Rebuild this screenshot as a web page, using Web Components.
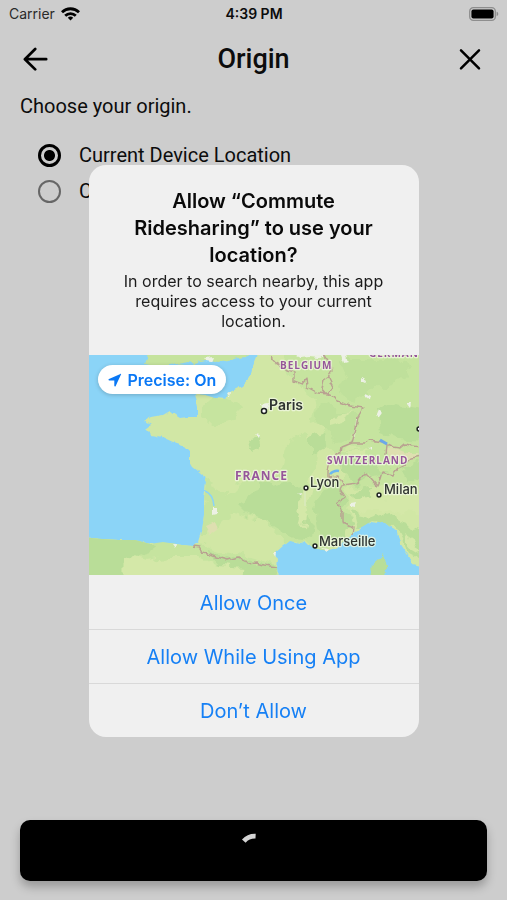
<!DOCTYPE html>
<html lang="en">
<head>
<meta charset="utf-8">
<meta name="viewport" content="width=device-width, initial-scale=1">
<title>Origin</title>
<style>
    body {
        margin: 0;
        background: #cdcdcd;
        color: #0c0c0c;
        font-family: Roboto, sans-serif;
    }
</style>
</head>
<body>

<origin-screen>
    <status-bar slot="status" carrier="Carrier" time="4:39 PM"></status-bar>
    <nav-header slot="header">Origin</nav-header>
    <span slot="hint">Choose your origin.</span>
    <radio-option name="device" checked>Current Device Location</radio-option>
    <radio-option name="custom">Custom</radio-option>
    <loading-button slot="footer"></loading-button>
</origin-screen>

<permission-dialog>
    <span slot="title">Allow “Commute Ridesharing” to use your location?</span>
    <span slot="message">In order to search nearby, this app requires access to your current location.</span>
    <location-map slot="map">Precise: On</location-map>
    <dialog-action>Allow Once</dialog-action>
    <dialog-action>Allow While Using App</dialog-action>
    <dialog-action>Don’t Allow</dialog-action>
</permission-dialog>

<template id="origin-screen">
    <style>
        :host {
            display: flex;
            flex-direction: column;
            min-height: 100vh;
            box-sizing: border-box;
            padding-bottom: 19px;
        }

        main {
            flex: 1;
            padding: 4px 20px;
            font-size: 20px;
            line-height: 24px;
        }

        p {
            margin: 0 0 19px;
        }

        footer {
            padding: 0 20px;
        }
    </style>
    <slot name="status"></slot>
    <slot name="header"></slot>
    <main>
        <p><slot name="hint"></slot></p>
        <div role="radiogroup" aria-label="Origin"><slot></slot></div>
    </main>
    <footer><slot name="footer"></slot></footer>
</template>

<template id="status-bar">
    <style>
        :host {
            display: grid;
            grid-template-columns: 1fr auto 1fr;
            align-items: center;
            height: 28px;
            padding: 0 8px 0 9px;
            font: 14px/20px Inter, sans-serif;
        }

        .left {
            display: flex;
            align-items: center;
            gap: 6px;
        }

        .carrier {
            color: #2a2a2a;
        }

        .time {
            font-weight: 600;
        }

        .battery {
            justify-self: end;
        }

        svg {
            display: block;
        }
    </style>
    <div class="left">
        <span class="carrier"></span>
        <svg width="19" height="14" viewBox="0 0 19 14" fill="none" stroke="#000" stroke-width="2.8" aria-hidden="true">
            <path d="M1 5.2a12.2 12.2 0 0 1 17 0"/>
            <path d="M4.2 8.7a7.6 7.6 0 0 1 10.6 0"/>
            <path d="M9.5 13.4l-2.7-2.7a3.9 3.9 0 0 1 5.4 0z" fill="#000" stroke="none"/>
        </svg>
    </div>
    <span class="time"></span>
    <svg class="battery" width="30" height="14" viewBox="0 0 30 14" aria-hidden="true">
        <rect x="0.7" y="0.7" width="25.6" height="12.6" rx="3.6" fill="none" stroke="#8e8e8e" stroke-width="1.3"/>
        <rect x="2.4" y="2.4" width="22.2" height="9.2" rx="2" fill="#000"/>
        <path d="M27.6 4.8c2.2.6 2.2 3.8 0 4.4z" fill="#8e8e8e"/>
    </svg>
</template>

<template id="nav-header">
    <style>
        :host {
            display: flex;
            align-items: center;
            justify-content: space-between;
            height: 62px;
            padding: 0 21px;
            box-sizing: border-box;
        }

        h1 {
            margin: 0;
            font-size: 27px;
            line-height: 32px;
            font-weight: 500;
        }

        button {
            width: 32px;
            height: 32px;
            padding: 0;
            border: 0;
            background: none;
            color: #000;
        }

        svg {
            display: block;
            margin: auto;
        }
    </style>
    <button aria-label="Back">
        <svg width="28" height="28" viewBox="0 0 28 28" fill="none" stroke="currentColor" stroke-width="2.7" stroke-linecap="round" stroke-linejoin="round">
            <path d="M12.2 4L1.9 14.2l10.3 10.2M2.3 14.2h20.9"/>
        </svg>
    </button>
    <h1><slot></slot></h1>
    <button aria-label="Close">
        <svg width="28" height="28" viewBox="0 0 28 28" fill="none" stroke="currentColor" stroke-width="2.5" stroke-linecap="round">
            <path d="M5 5.4l18 18M23 5.4l-18 18"/>
        </svg>
    </button>
</template>

<template id="radio-option">
    <style>
        :host {
            display: block;
            padding-left: 18px;
        }

        label {
            display: flex;
            align-items: center;
            gap: 18px;
            height: 36px;
        }

        input {
            appearance: none;
            box-sizing: border-box;
            width: 23px;
            height: 23px;
            margin: 0;
            border: 2px solid #666;
            border-radius: 50%;
        }

        input:checked {
            border: 3px solid #000;
            background: radial-gradient(circle, #000 5px, transparent 6px);
        }
    </style>
    <label><input type="radio"><span><slot></slot></span></label>
</template>

<template id="loading-button">
    <style>
        :host {
            display: block;
        }

        button {
            display: flex;
            align-items: center;
            justify-content: center;
            width: 100%;
            height: 61px;
            padding: 0;
            border: 0;
            border-radius: 10px;
            background: #000;
            box-shadow: 0 6px 10px rgba(0, 0, 0, 0.25);
        }
    </style>
    <button aria-label="Loading" aria-busy="true">
        <svg width="36" height="36" viewBox="0 0 36 36" fill="none" stroke="#d4d4d4" stroke-width="4.8">
            <path d="M7.8 8.2A14.8 14.8 0 0 1 19.6 3.2"/>
        </svg>
    </button>
</template>

<template id="permission-dialog">
    <style>
        :host {
            position: fixed;
            inset: 0;
            display: flex;
            align-items: center;
            justify-content: center;
            padding: 2px 20px 0;
            font-family: Inter, sans-serif;
        }

        section {
            width: 100%;
            max-width: 330px;
            border-radius: 17px;
            background: #f0f0f0;
            overflow: hidden;
        }

        header {
            padding: 23px 32px 24px;
            text-align: center;
        }

        h2 {
            margin: 0 0 2px;
            font-size: 20px;
            line-height: 27px;
            font-weight: 600;
            color: #0a0a0a;
        }

        p {
            margin: 0;
            font-size: 16px;
            line-height: 20px;
            color: #1c1c1c;
        }
    </style>
    <section role="dialog" aria-modal="true" aria-labelledby="title">
        <header>
            <h2 id="title"><slot name="title"></slot></h2>
            <p><slot name="message"></slot></p>
        </header>
        <slot name="map"></slot>
        <slot></slot>
    </section>
</template>

<template id="dialog-action">
    <style>
        :host {
            display: block;
            border-top: 1px solid #d9d9d9;
        }

        :host(:first-of-type) {
            border-top-color: #f0f0f0;
        }

        button {
            display: block;
            width: 100%;
            height: 53px;
            padding: 0;
            border: 0;
            background: none;
            color: #1680f5;
            font: 20px/24px Inter, sans-serif;
        }
    </style>
    <button><slot></slot></button>
</template>

<template id="location-map">
    <style>
        :host {
            display: block;
            position: relative;
        }

        .map {
            display: block;
            width: 100%;
            height: auto;
            aspect-ratio: 330 / 220;
            background: #8bd4f7;
        }

        text {
            font-family: Inter, sans-serif;
            font-weight: 600;
            paint-order: stroke;
            stroke: rgba(240, 247, 225, 0.8);
            stroke-width: 2.4px;
            stroke-linejoin: round;
        }

        .country {
            font-family: "Open Sans", sans-serif;
            font-weight: 700;
            font-size: 10px;
            letter-spacing: 1px;
            fill: #96559a;
        }

        .home {
            font-size: 12px;
        }

        .city {
            font-size: 13px;
            font-weight: 500;
            fill: #2e3330;
        }

        .capital {
            font-size: 14px;
            font-weight: 600;
        }

        button {
            position: absolute;
            top: 10px;
            left: 9px;
            display: flex;
            align-items: center;
            gap: 6px;
            height: 29px;
            padding: 0 10px;
            border: 0;
            border-radius: 15px;
            background: #fff;
            box-shadow: 0 1px 4px rgba(0, 0, 0, 0.2);
            color: #0a78f5;
            font: 600 16px/20px Inter, sans-serif;
        }
    </style>
    <svg class="map" viewBox="0 0 330 220" role="img" aria-label="Map of France">
        <defs>
            <filter id="rough" x="-5%" y="-5%" width="110%" height="110%">
                <feTurbulence type="fractalNoise" baseFrequency="0.14" numOctaves="2" seed="4"/>
                <feDisplacementMap in="SourceGraphic" scale="5" xChannelSelector="R" yChannelSelector="G"/>
            </filter>
            <filter id="soft" x="-10%" y="-10%" width="120%" height="120%">
                <feTurbulence type="fractalNoise" baseFrequency="0.07" numOctaves="3" seed="9"/>
                <feDisplacementMap in="SourceGraphic" scale="16" xChannelSelector="R" yChannelSelector="G"/>
            </filter>
            <path id="mainland" d="M168-6L167 3 164 10 161 22 153 31 139 38 137 44 126 43 116 40 106 39 109 52 109 62 99 62 91 63 86 60 81 56 74 60 63 62 55 66 62 70 57 74 63 80 73 82 84 87 93 90 101 98 101 107 104 112 114 120 117 127 115 145 115 160 113 177 110 187 104 191 93 190 74 187 61 189 46 185 29 185 13 184-6 182V226H189L188 212 189 204 186 198 194 191 201 186 211 188 216 185 224 193 239 196 249 192 258 183 271 173 283 166 296 168 308 177 311 188 319 200 324 210 336 213V-6Z"/>
            <clipPath id="land"><use href="#mainland"/></clipPath>
        </defs>

        <g filter="url(#rough)">
            <path d="M59-6L58 3 56 9 70 12 88 9 99 7 106 9 112 7 121 5 129 7 139 5 149 3 156 2 164-6Z" fill="#c5e39d"/>
            <use href="#mainland" fill="#d1e7a5"/>
            <path d="M294 199L297 212 296 226H284L281 212 289 205Z" fill="#b9de98"/>
        </g>

        <!-- woods and hills -->
        <g clip-path="url(#land)">
            <g filter="url(#soft)" fill="#c6e49f">
                <path d="M190-8H338V96L300 100 262 90 246 100 232 88 222 84 236 72 222 62 228 46 204 28Z"/>
                <path d="M112 50L134 40 152 52 146 66 124 72 112 64Z"/>
                <path d="M194 92L214 76 230 90 226 112 214 134 198 138 184 124 190 108Z"/>
                <path d="M136 142L150 128 166 120 200 126 226 130 250 124 262 140 256 196 222 196 196 188 176 166 150 158 136 156Z"/>
                <path d="M116 126L136 134 142 160 124 178 112 178Z"/>
                <path d="M-10 178H60L100 186 130 196 170 204 192 212V228H-10Z"/>
                <path d="M250 96L300 90 338 96V130L286 134 254 130Z"/>
            </g>
            <g filter="url(#soft)" fill="#b9dd98">
                <path d="M-10 180H40L68 188 62 198 48 202 33 207V228H-10Z"/>
                <path d="M80 214L92 208 104 216 98 226H78Z"/>
                <path d="M114 194L140 203 160 206 186 211 190 226H160L130 212Z"/>
                <path d="M150 150L166 140 170 126 184 130 200 126 214 136 212 156 226 170 224 186 206 184 192 176 176 166 160 160Z"/>
                <path d="M234 134L252 132 260 146 254 156 262 170 256 184 240 186 228 176 226 156Z"/>
                <path d="M226 56L240 50 252 58 268 58 264 82 250 90 238 80Z" fill="#bfe09b"/>
                <path d="M160 84L168 80 173 92 164 97Z"/>
                <path d="M222 82L232 78 234 94 222 100Z"/>
                <path d="M248 2H300L322 10 306 30 280 34 262 48 250 34 256 20Z" fill="#bfe09b"/>
                <path d="M288 56L308 50 336 54V86L308 84 290 78Z"/>
                <path d="M246 112L262 98 282 106 300 116 284 120 268 130Z"/>
                <path d="M262 138L276 132 286 136 270 150Z"/>
                <path d="M262 158L280 162 296 156 314 168 336 176V206L320 198 310 178 290 166 266 176Z"/>
                <path d="M312 110L336 104V126L320 124Z"/>
            </g>
            <g filter="url(#soft)" fill="#d4e8a8">
                <path d="M214 134L222 130 218 150 214 174 208 166Z"/>
                <path d="M262 150L276 142 300 140 338 136V160L312 158 286 152 268 158Z"/>
                <path d="M258 96L280 94 272 104 258 102Z"/>
                <path d="M34 202L60 206 80 202 110 202 130 212 156 214 150 226H34Z"/>
                <path d="M314 176L326 184 332 200 322 194Z"/>
                <path d="M242 62L262 58 256 66 242 70Z"/>
            </g>
            <g filter="url(#rough)" fill="#dedfb0">
                <path d="M117 171L126 167 129 174 121 180Z"/>
                <path d="M297 92L308 94 318 98 330 98 324 104 312 108 300 102Z"/>
            </g>
        </g>

        <!-- towns -->
        <g filter="url(#rough)" fill="#edf1e5">
            <path d="M204-1h32l-6 4-10-1-8 1z"/>
            <path d="M252 0h5l2 7-4 1z"/>
            <path d="M273 23l5 3-1 3-4-2z"/>
            <path d="M276 38l6 3-1 4-4-3z"/>
            <path d="M289 54l5 5-3 4-4-4z"/>
            <path d="M171 49l8-1 2 6-8 1z"/>
            <path d="M124 153l4 0 0 5-4 1z"/>
            <path d="M166 79l5 1-1 3z"/>
            <path d="M262 148l5-1-1 5-4-1z"/>
            <path d="M208 138l5-1-1 3z"/>
            <path d="M116 3l8-1-2 5-5-1z"/>
            <path d="M138 38l4-1-1 5z"/>
            <path d="M83 189l4 0-1 4z"/>
            <path d="M184 198l4 0-1 5z"/>
            <path d="M232 193l8 1-2 3z"/>
            <path d="M279 92l3-1 0 4z"/>
            <path d="M318 48l4 0-1 4z"/>
        </g>

        <path d="M116 136q8 3 9 15" fill="none" stroke="#8bd4f7" stroke-width="1.6"/>
        <path d="M216 133v18M268 62l-3 22" fill="none" stroke="#dbe9c4" stroke-width="1.2"/>

        <!-- borders -->
        <g filter="url(#rough)" fill="none" stroke="#b9a191" stroke-width="1.4" stroke-linejoin="round">
            <path d="M179-3L183 5 190 9 198 16 205 18 205 26 213 29 217 24 218 32 229 38 239 39 246 42 249 47 261 51 274 53 269 62 267 73 263 88"/>
            <path d="M232-3L237 5 241 10 243 15 239 22 234 25 232 33 237 39M239 22L244 32 239 39"/>
            <path d="M263 88L253 92 252 97 246 100 241 108 239 116 239 122 249 121 254 130 251 135 256 143 248 148 253 158 253 167 264 172 263 180"/>
            <path d="M263 88L276 88 281 85 294 87 304 92 311 93 316 89 323 91 334 92M298 90L297 100"/>
            <path d="M254 130L268 128 276 118 281 123 288 131 291 124 293 117 303 120 309 113 316 109 322 103 334 101"/>
            <path d="M104 191L111 192 114 198 128 202 139 205 149 202 156 205 159 209 167 208 174 210 188 212"/>
        </g>
        <path d="M241 119q4-4 9-3" fill="none" stroke="#6cb8f0" stroke-width="2.4"/>
        <path d="M291 85l7 4" fill="none" stroke="#6ba7ea" stroke-width="3"/>

        <!-- labels -->
        <text class="country" x="191" y="14">BELGIUM</text>
        <text class="country" x="280" y="2">GERMANY</text>
        <text class="country home" x="146" y="125">FRANCE</text>
        <text class="country" x="238" y="109">SWITZERLAND</text>
        <text class="city capital" x="180" y="55">Paris</text>
        <text class="city" x="221" y="132">Lyon</text>
        <text class="city" x="295" y="139">Milan</text>
        <text class="city" x="230" y="191">Marseille</text>
        <g fill="#fff" stroke="#1e2321" stroke-width="1.5">
            <circle cx="175" cy="56" r="2.5"/>
            <circle cx="217" cy="133" r="1.9"/>
            <circle cx="290" cy="140" r="1.9"/>
            <circle cx="226" cy="191" r="1.9"/>
            <circle cx="330" cy="74" r="1.9"/>
        </g>
    </svg>
    <button>
        <svg width="14" height="14" viewBox="0 0 14 14" fill="currentColor" aria-hidden="true">
            <path d="M12.4.9L1 6.1c-.8.4-.6 1.4.2 1.4h5.1v5.2c0 .8 1.1 1 1.4.2L13 1.6c.3-.6-.1-.9-.6-.7z"/>
        </svg>
        <slot></slot>
    </button>
</template>

<script>
    class BaseElement extends HTMLElement {
        constructor() {
            super();
            const template = document.getElementById(this.localName);
            this.attachShadow({mode: 'open'});
            this.shadowRoot.appendChild(template.content.cloneNode(true));
        }
    }

    class StatusBar extends BaseElement {
        connectedCallback() {
            this.shadowRoot.querySelector('.carrier').textContent = this.getAttribute('carrier');
            this.shadowRoot.querySelector('.time').textContent = this.getAttribute('time');
        }
    }

    class RadioOption extends BaseElement {
        connectedCallback() {
            this.input = this.shadowRoot.querySelector('input');
            this.input.value = this.getAttribute('name');
            this.input.checked = this.hasAttribute('checked');
            this.input.addEventListener('change', () => this.uncheckOthers());
        }

        // radios in separate shadow roots don't share a group
        uncheckOthers() {
            this.parentElement.querySelectorAll('radio-option').forEach((option) => {
                if (option !== this) option.input.checked = false;
            });
        }
    }

    class PermissionDialog extends BaseElement {
        connectedCallback() {
            this.querySelectorAll('dialog-action').forEach((action) => {
                action.addEventListener('click', () => this.remove());
            });
        }
    }

    customElements.define('origin-screen', class extends BaseElement {});
    customElements.define('status-bar', StatusBar);
    customElements.define('nav-header', class extends BaseElement {});
    customElements.define('radio-option', RadioOption);
    customElements.define('loading-button', class extends BaseElement {});
    customElements.define('permission-dialog', PermissionDialog);
    customElements.define('dialog-action', class extends BaseElement {});
    customElements.define('location-map', class extends BaseElement {});
</script>
</body>
</html>
